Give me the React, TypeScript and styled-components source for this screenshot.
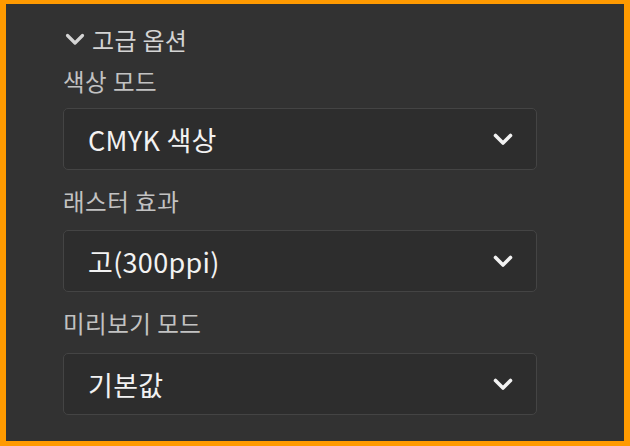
import React from "react";
import styled, { createGlobalStyle } from "styled-components";

const GlobalStyle = createGlobalStyle`
  html, body {
    margin: 0;
    padding: 0;
    background: #323232;
  }
  body {
    font-family: "Noto Sans CJK KR", "Noto Sans", sans-serif;
  }
`;

const Frame = styled.div`
  box-sizing: border-box;
  width: 630px;
  height: 446px;
  background: #323232;
  border-style: solid;
  border-color: #ff9a00;
  border-width: 4px 6px 5px 6px;
  padding: 20px 0 0 57px;
`;

const Header = styled.div`
  display: flex;
  align-items: center;
  gap: 7px;
  height: 30px;
  padding-left: 2px;
  color: #d4d4d4;
  font-size: 24px;
  letter-spacing: 0.3px;
  margin-bottom: 12px;
`;

const Field = styled.div`
  display: flex;
  flex-direction: column;
  width: 474px;
  margin-bottom: 16px;
`;

const Label = styled.div<{ $gap: number }>`
  height: 30px;
  line-height: 30px;
  color: #c2c2c2;
  font-size: 23.5px;
  letter-spacing: 0.5px;
  margin-bottom: ${p => p.$gap}px;
`;

const Select = styled.div`
  box-sizing: border-box;
  height: 62px;
  display: flex;
  align-items: center;
  justify-content: space-between;
  padding: 0 23px 0 24px;
  background: #2d2d2d;
  border: 1.5px solid #444444;
  border-radius: 5px;
  color: #f2f2f2;
  font-size: 27px;
  letter-spacing: 0.3px;
`;

function Chevron({ size, stroke }: { size: number; stroke: number }) {
  return (
    <svg width={size} height={size * 0.65} viewBox="0 0 20 13" fill="none">
      <path
        d="M2.5 2.5 L10 10 L17.5 2.5"
        stroke="currentColor"
        strokeWidth={stroke}
        strokeLinecap="round"
        strokeLinejoin="round"
      />
    </svg>
  );
}

const fields = [
  { label: "색상 모드", value: "CMYK 색상", gap: 12 },
  { label: "래스터 효과", value: "고(300ppi)", gap: 14 },
  { label: "미리보기 모드", value: "기본값", gap: 15 }
];

export default function App() {
  return (
    <>
      <GlobalStyle />
      <Frame>
        <Header>
          <Chevron size={20} stroke={3.2} />
          <span>고급 옵션</span>
        </Header>
        {fields.map(f => (
          <Field key={f.label}>
            <Label $gap={f.gap}>{f.label}</Label>
            <Select>
              <span>{f.value}</span>
              <Chevron size={20} stroke={3.6} />
            </Select>
          </Field>
        ))}
      </Frame>
    </>
  );
}
